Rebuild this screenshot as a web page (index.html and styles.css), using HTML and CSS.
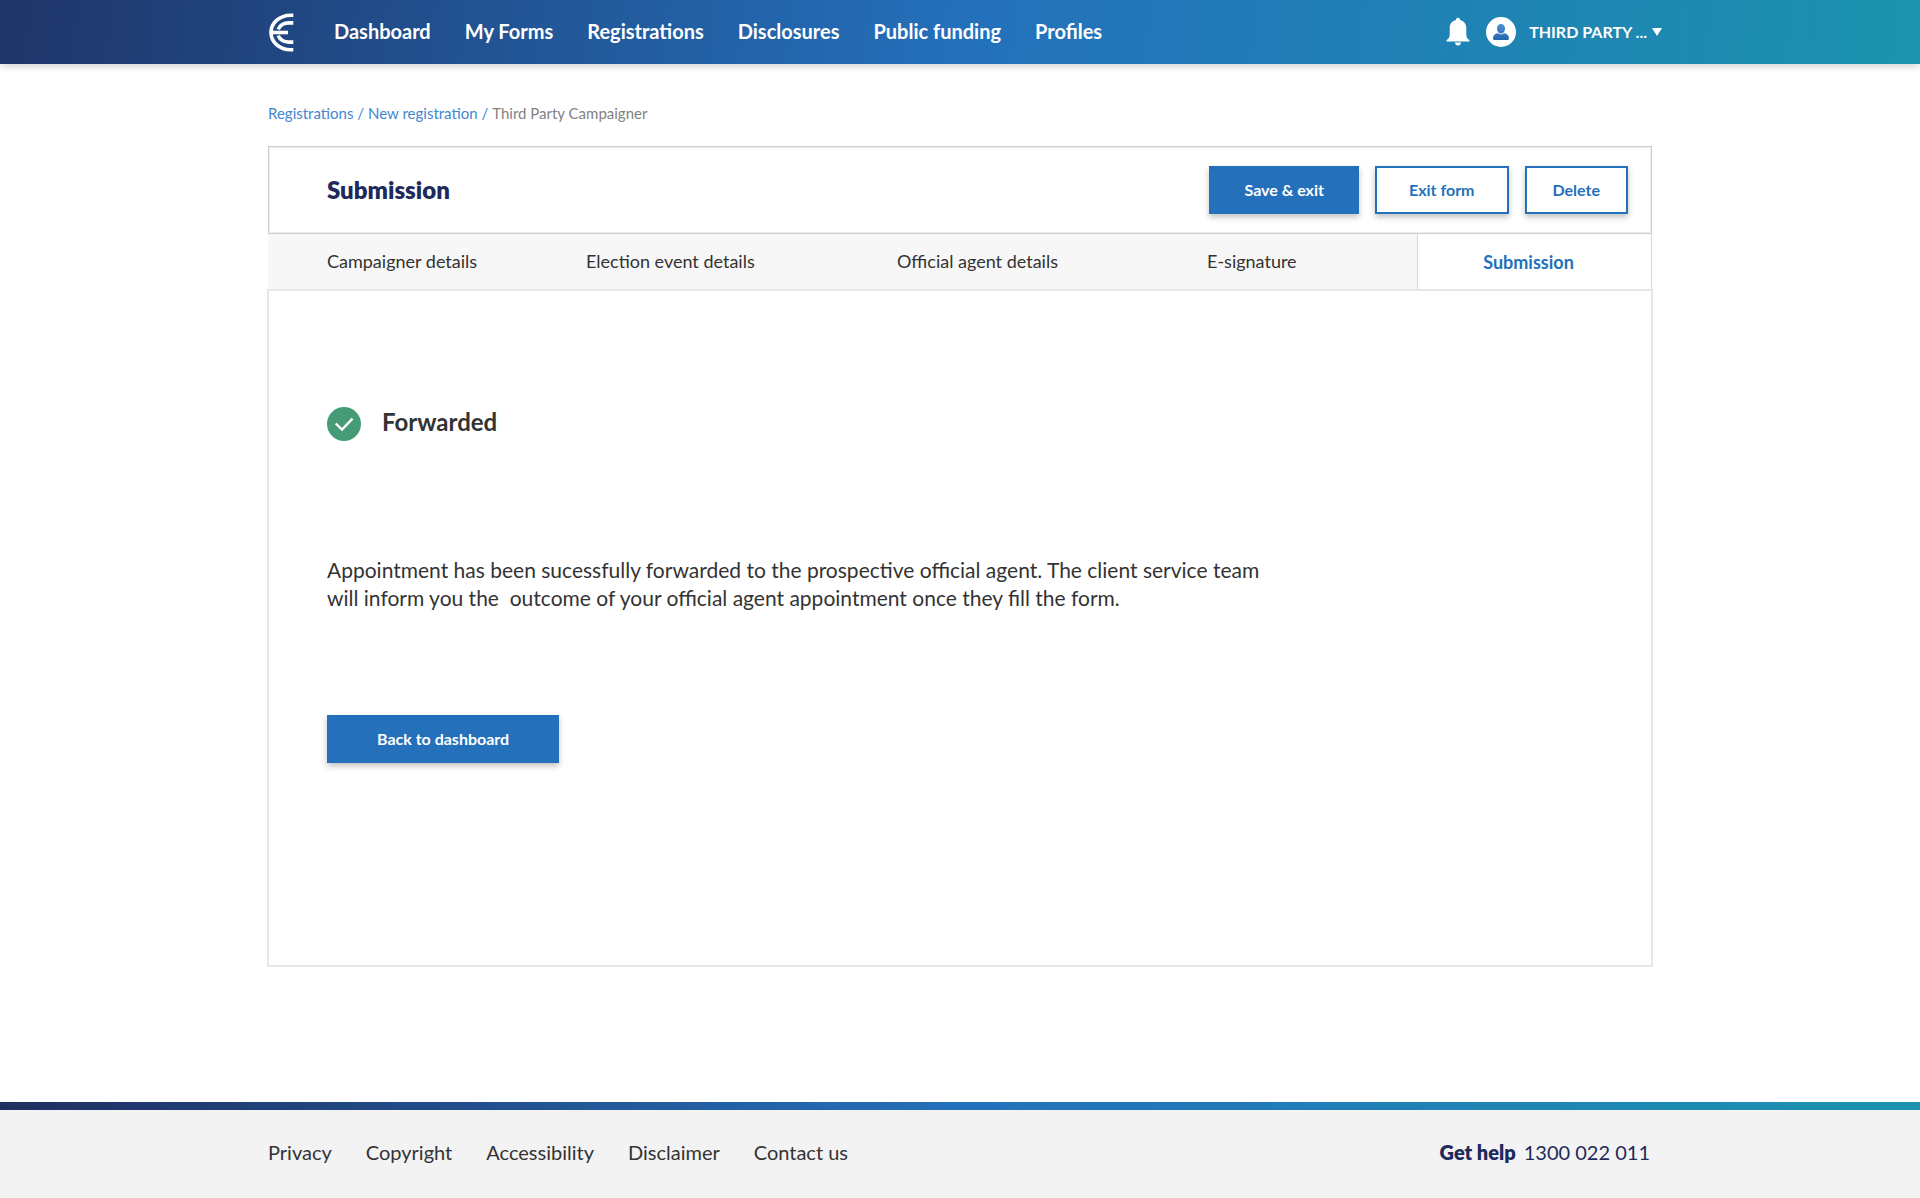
FILE: index.html
```html
<!DOCTYPE html>
<html lang="en">
<head>
<meta charset="utf-8">
<meta name="viewport" content="width=device-width, initial-scale=1">
<title>Submission</title>
<link rel="stylesheet" href="styles.css">
</head>
<body>
<header class="header">
  <div class="container header-inner">
    <a class="logo" href="#" aria-label="Home">
      <svg width="26" height="40" viewBox="-1 -1 26 40" fill="none" stroke="#fff" stroke-width="3.6">
        <path d="M24.300 2.200H22C10 2.200 2 10.200 2 19.500S10 36.800 22 36.800H24.300"/>
        <path d="M24.300 9.900H20C14.500 9.900 11 12.200 9.200 16.400"/>
        <path d="M24.300 29.100H20C14.500 29.100 11 26.800 9.200 22.600"/>
        <path d="M2 19.500H19"/>
      </svg>
    </a>
    <nav class="nav" aria-label="Main">
      <a href="#">Dashboard</a>
      <a href="#">My Forms</a>
      <a href="#">Registrations</a>
      <a href="#">Disclosures</a>
      <a href="#">Public funding</a>
      <a href="#">Profiles</a>
    </nav>
    <div class="account">
      <button class="icon-button" type="button" aria-label="Notifications">
        <svg width="24" height="30" viewBox="0 0 24 30" fill="#fff">
          <path d="M12 .8c1.200 0 2 .9 2 2.200 4 .9 6.300 4 6.300 8.300v6.200c0 2.600.8 4.200 3.100 5.500v1.500H.6V23c2.300-1.300 3.100-2.900 3.100-5.500v-6.200C3.700 7 6 3.900 10 3c0-1.300.8-2.200 2-2.200zM9 25.500h6c0 1.700-1.200 2.900-3 2.900s-3-1.200-3-2.900z"/>
        </svg>
      </button>
      <button class="user" type="button">
        <svg width="30" height="30" viewBox="0 0 30 30">
          <defs><linearGradient id="person" x1="0" y1="0" x2="0" y2="1"><stop offset="0" stop-color="#4a90d2"/><stop offset="1" stop-color="#2465b0"/></linearGradient></defs>
          <circle cx="15" cy="15" r="15" fill="#fff"/>
          <path fill="url(#person)" d="M15 7c2.500 0 4 1.900 4 4.400 0 2.800-1.700 5-4 5s-4-2.200-4-5C11 8.900 12.500 7 15 7zm-3.200 9.300c1.900 1.500 4.500 1.500 6.400 0 3 .4 4.800 2.300 4.800 4.900 0 1-.7 1.800-1.700 1.800H8.700c-1 0-1.700-.8-1.700-1.800 0-2.600 1.800-4.500 4.800-4.900z"/>
        </svg>
        <span>THIRD PARTY ...</span>
        <svg width="10" height="8" viewBox="0 0 10 8" fill="#fff"><path d="M0 0h10L5 8z"/></svg>
      </button>
    </div>
  </div>
</header>

<main class="container main">
  <nav class="breadcrumb" aria-label="Breadcrumb">
    <a href="#">Registrations /</a>
    <a href="#">New registration /</a>
    <span>Third Party Campaigner</span>
  </nav>

  <div class="title-bar">
    <h1>Submission</h1>
    <div class="actions">
      <button class="button primary" type="button">Save &amp; exit</button>
      <button class="button" type="button">Exit form</button>
      <button class="button compact" type="button">Delete</button>
    </div>
  </div>

  <nav class="tabs" aria-label="Form steps">
    <a href="#">Campaigner details</a>
    <a href="#">Election event details</a>
    <a href="#">Official agent details</a>
    <a href="#">E-signature</a>
    <a class="current" href="#" aria-current="step">Submission</a>
  </nav>

  <section class="panel">
    <div class="status">
      <svg width="34" height="34" viewBox="0 0 34 34">
        <circle cx="17" cy="17" r="17" fill="#459b76"/>
        <path d="M8.700 16.500L15 22.500L25.500 11.700" fill="none" stroke="#fff" stroke-width="2.400"/>
      </svg>
      <h2>Forwarded</h2>
    </div>
    <p class="message">Appointment has been sucessfully forwarded to the prospective official agent. The client service team will inform you the&nbsp; outcome of your official agent appointment once they fill the form.</p>
    <button class="button primary wide" type="button">Back to dashboard</button>
  </section>
</main>

<footer class="footer">
  <div class="container footer-inner">
    <nav class="footer-links" aria-label="Footer">
      <a href="#">Privacy</a>
      <a href="#">Copyright</a>
      <a href="#">Accessibility</a>
      <a href="#">Disclaimer</a>
      <a href="#">Contact us</a>
    </nav>
    <p class="help"><strong>Get help</strong><a href="tel:1300022011">1300 022 011</a></p>
  </div>
</footer>
</body>
</html>
```

FILE: styles.css
```css
* {
  box-sizing: border-box;
}

body {
  display: flex;
  flex-direction: column;
  min-height: 100vh;
  margin: 0;
  background: #fff;
  color: #333;
  font: 400 18px/24px Lato, sans-serif;
}

h1, h2, p {
  margin: 0;
}

a {
  color: inherit;
  text-decoration: none;
}

button {
  font: inherit;
  cursor: pointer;
}

svg {
  display: block;
  flex: none;
}

.container {
  width: 100%;
  max-width: 1384px;
  margin: 0 auto;
}

.header {
  background: linear-gradient(97deg, #1f3569 0%, #2470bb 50%, #1b93ae 100%);
  box-shadow: 0 2px 8px rgba(0, 0, 0, 0.2);
  color: #fff;
}

.header-inner {
  display: flex;
  align-items: center;
  height: 64px;
}

.logo {
  margin-right: 40px;
}

.nav {
  display: flex;
  gap: 34px;
  padding-bottom: 3px;
  font-size: 20px;
  font-weight: 700;
}

.account {
  display: flex;
  align-items: center;
  gap: 16px;
  margin-left: auto;
  margin-right: -10px;
}

.icon-button, .user {
  padding: 0;
  border: 0;
  background: none;
  color: inherit;
}

.user {
  display: flex;
  align-items: center;
  font-size: 16px;
  font-weight: 700;
}

.user span {
  margin: 0 5px 0 13px;
}

.main {
  flex: 1;
  padding: 37px 0 135px;
}

.breadcrumb {
  display: flex;
  gap: 4px;
  margin-bottom: 21px;
  color: #828282;
  font-size: 15px;
}

.breadcrumb a {
  color: #4386d1;
}

.title-bar {
  display: flex;
  align-items: center;
  justify-content: space-between;
  height: 88px;
  padding: 0 23px 0 58px;
  border: 1px solid #cfcfcf;
  box-shadow: inset 0 0 0 1px #ececec;
}

h1 {
  color: #1e2a5c;
  font-size: 24px;
  font-weight: 800;
}

.actions {
  display: flex;
  gap: 16px;
}

.button {
  height: 48px;
  padding: 0 32px;
  border: 2px solid #2470bb;
  background: #fff;
  box-shadow: 0 3px 6px rgba(0, 0, 0, 0.25);
  color: #2470bb;
  font-size: 16px;
  font-weight: 700;
}

.compact {
  padding: 0 26px;
}

.primary {
  padding: 0 33px;
  background: #2470bb;
  color: #fff;
}

.wide {
  padding: 0 48px;
}

.tabs {
  display: grid;
  grid-template-columns: 318fr 311fr 310fr 210fr 235fr;
  height: 55px;
  background: #f7f7f7;
}

.tabs a {
  display: flex;
  align-items: center;
  padding-bottom: 2px;
}

.tabs a:first-child {
  padding-left: 59px;
}

.tabs .current {
  justify-content: center;
  padding: 0 12px 0 0;
  border: 1px solid #d8d8d8;
  border-width: 0 1px;
  background: #fff;
  color: #2470bb;
  font-weight: 700;
}

.panel {
  margin: 0 -1px;
  padding: 116px 58px 202px;
  border: 2px solid #e6e6e6;
}

.status {
  display: flex;
  align-items: center;
  gap: 21px;
}

h2 {
  padding-bottom: 4px;
  font-size: 24px;
  font-weight: 700;
}

.message {
  max-width: 948px;
  margin: 115px 0 103px;
  font-size: 21px;
  line-height: 28px;
}

.footer {
  border-top: 8px solid;
  border-image: linear-gradient(90deg, #1f2f60 0%, #2470bb 50%, #1b93ae 100%) 1;
  background: #f3f3f3;
  font-size: 20px;
}

.footer-inner {
  display: flex;
  align-items: center;
  justify-content: space-between;
  height: 88px;
  padding-bottom: 4px;
}

.footer-links {
  display: flex;
  gap: 34px;
}

.help {
  display: flex;
  gap: 8px;
  padding-right: 2px;
  color: #1e2a5c;
}

.help strong {
  font-weight: 800;
}
```
